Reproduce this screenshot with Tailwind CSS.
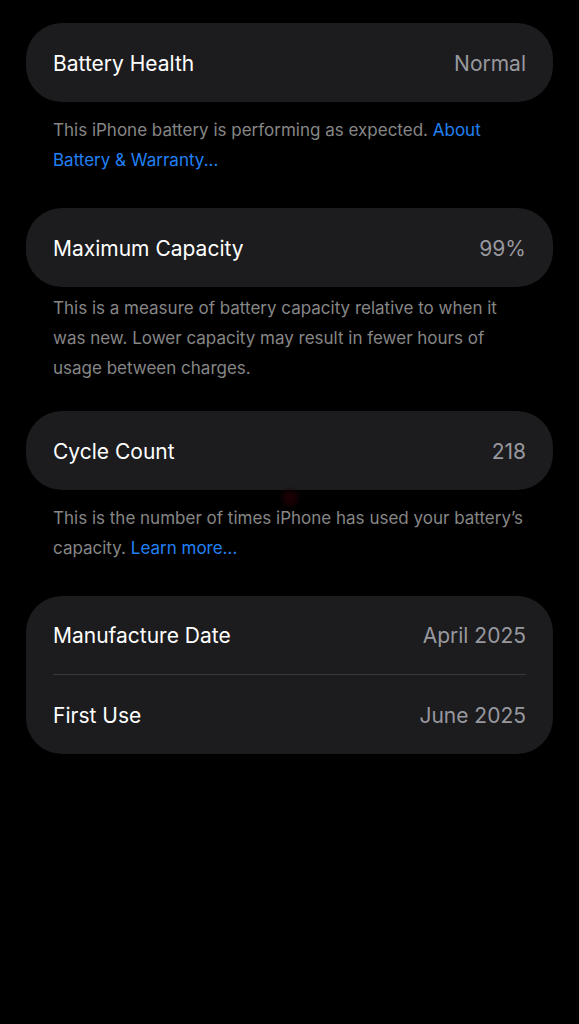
<!DOCTYPE html>
<html lang="en">
<head>
    <meta charset="UTF-8">
    <meta name="viewport" content="width=device-width, initial-scale=1.0">
    <title>Battery Health</title>
    <script src="https://cdn.jsdelivr.net/npm/@tailwindcss/browser@4"></script>
</head>
<body class="min-h-screen bg-black font-['Inter',sans-serif] text-white">
    <main class="px-[26px] pt-[23px]">
        <!-- Battery health -->
        <section class="mb-[33px]">
            <dl class="flex h-[79px] items-center justify-between rounded-[36px] bg-[#1c1c1e] px-[27px] pt-0.5 text-[21px]">
                <dt>Battery Health</dt>
                <dd class="text-[#98989f]">Normal</dd>
            </dl>
            <p class="px-[27px] pt-[13px] text-[17px] leading-[30px] text-[#868686]">This iPhone battery is performing as expected. <a href="#" class="text-[#2180f5]">About Battery &amp; Warranty...</a></p>
        </section>

        <!-- Maximum capacity -->
        <section class="mb-7">
            <dl class="flex h-[79px] items-center justify-between rounded-[36px] bg-[#1c1c1e] px-[27px] pt-0.5 text-[21px]">
                <dt>Maximum Capacity</dt>
                <dd class="text-[#98989f]">99%</dd>
            </dl>
            <p class="px-[27px] pt-1.5 text-[17px] leading-[30px] text-[#868686]">This is a measure of battery capacity relative to when it was new. Lower capacity may result in fewer hours of usage between charges.</p>
        </section>

        <!-- Cycle count -->
        <section class="relative mb-[33px]">
            <dl class="flex h-[79px] items-center justify-between rounded-[36px] bg-[#1c1c1e] px-[27px] pt-0.5 text-[21px]">
                <dt>Cycle Count</dt>
                <dd class="text-[#98989f]">218</dd>
            </dl>
            <!-- faint red marker under the card -->
            <span class="absolute top-[79px] left-1/2 h-4 w-4 -translate-x-1/2 rounded-full bg-[#190003] blur-[2px]"></span>
            <p class="relative px-[27px] pt-[13px] text-[17px] leading-[30px] text-[#868686]">This is the number of times iPhone has used your battery’s capacity. <a href="#" class="text-[#2180f5]">Learn more...</a></p>
        </section>

        <!-- Dates -->
        <dl class="rounded-[36px] bg-[#1c1c1e] px-[27px] text-[21px]">
            <div class="flex h-[79px] items-center justify-between border-b border-[#38383a] pt-0.5">
                <dt>Manufacture Date</dt>
                <dd class="text-[#98989f]">April 2025</dd>
            </div>
            <div class="flex h-[79px] items-center justify-between pt-0.5">
                <dt>First Use</dt>
                <dd class="text-[#98989f]">June 2025</dd>
            </div>
        </dl>
    </main>
</body>
</html>
